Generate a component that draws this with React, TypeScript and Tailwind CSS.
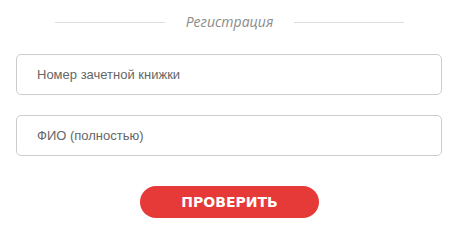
export default function App() {
  return (
    <div className="w-[459px] h-[227px] bg-white flex flex-col">
      <div className="flex items-center justify-center h-[22px] mt-[11px]">
        <div className="w-[110px] h-px bg-[#dcdcdc]" />
        <span className="px-[21px] text-[14px] italic text-[#8a8a8a] font-['Open_Sans',sans-serif] leading-none">
          Регистрация
        </span>
        <div className="w-[110px] h-px bg-[#dcdcdc]" />
      </div>
      <div className="flex flex-col gap-[20px] px-[16px] mt-[21px]">
        <input
          className="h-[41px] w-[426px] border border-[#cccccc] rounded-[5px] pl-[20px] text-[13px] text-[#555] placeholder:text-[#666] font-['Liberation_Sans',Arial,sans-serif] outline-none"
          placeholder="Номер зачетной книжки"
        />
        <input
          className="h-[41px] w-[426px] border border-[#cccccc] rounded-[5px] pl-[20px] text-[13px] text-[#555] placeholder:text-[#666] font-['Liberation_Sans',Arial,sans-serif] outline-none"
          placeholder="ФИО (полностью)"
        />
      </div>
      <div className="flex justify-center mt-[30px]">
        <button className="w-[179px] h-[32px] rounded-full bg-[#e53a37] text-white font-black text-[14px] font-['DejaVu_Sans',sans-serif]">
          ПРОВЕРИТЬ
        </button>
      </div>
    </div>
  );
}
